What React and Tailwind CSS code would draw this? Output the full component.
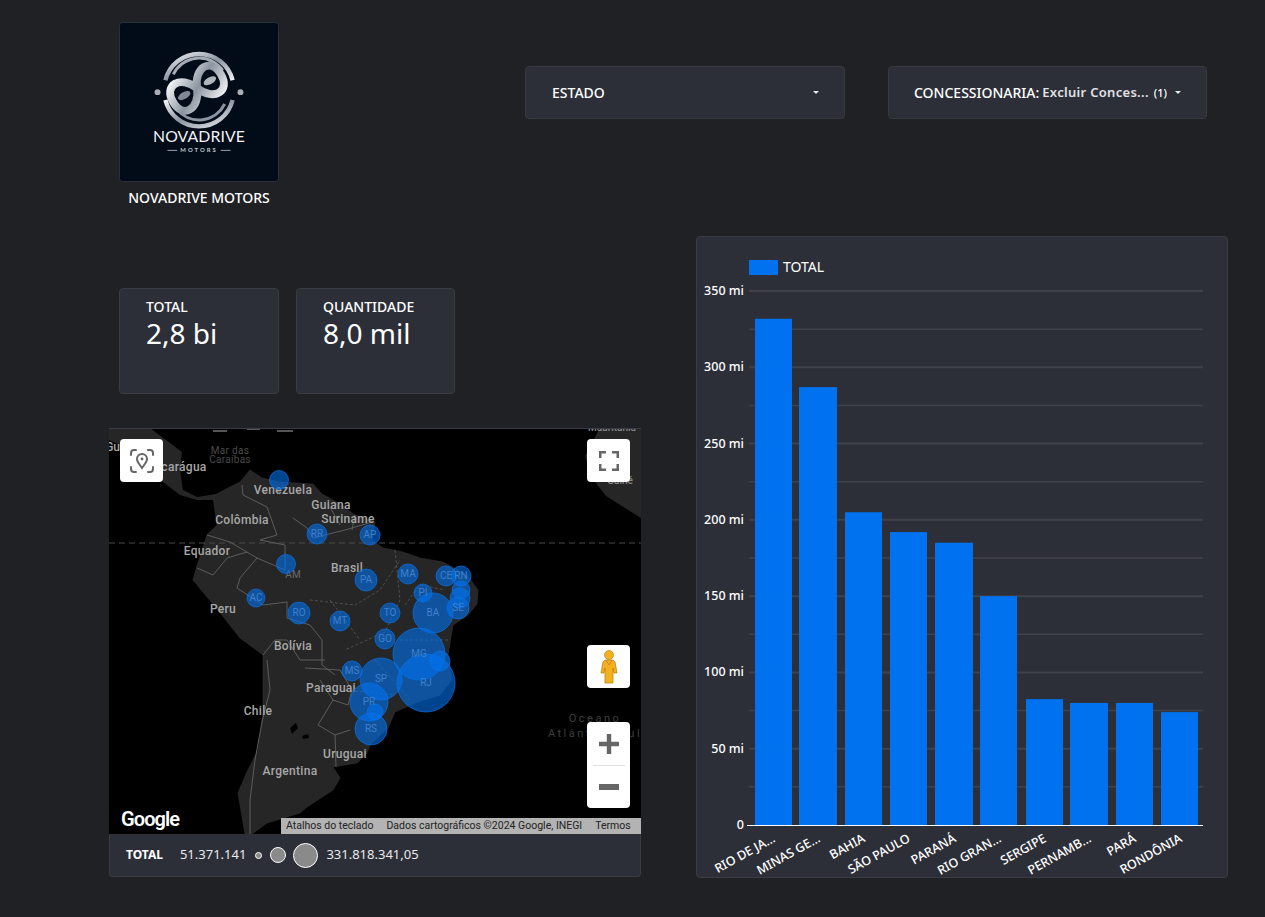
import React from 'react';

const BUBBLES = [
  [279, 480, 9.5, ''], [317, 534, 10, 'RR'], [370, 535, 10, 'AP'], [286, 564, 9.5, ''],
  [256, 598, 9, 'AC'], [299, 613, 11, 'RO'], [340, 621, 10, 'MT'], [366, 580, 11, 'PA'],
  [408, 574, 10, 'MA'], [390, 613, 10, 'TO'], [385, 639, 10, 'GO'], [423, 593, 9, 'PI'],
  [446, 576, 10, 'CE'], [461, 576, 10, 'RN'], [461, 590, 9, ''], [460, 598, 10, ''],
  [458, 608, 11, 'SE'], [433, 613, 20, 'BA'], [419, 654, 26, 'MG'], [440, 661, 10, ''],
  [426, 683, 29, 'RJ'], [381, 679, 21, 'SP'], [352, 671, 10, 'MS'], [369, 702, 19, 'PR'],
  [375, 712, 8, ''], [371, 729, 16, 'RS'],
];

const COUNTRY_LABELS = [
  ['Venezuela', 283, 494], ['Guiana', 331, 509], ['Colômbia', 242, 524], ['Suriname', 348, 523],
  ['Equador', 207, 555], ['Brasil', 347, 572], ['Peru', 223, 613], ['Bolívia', 293, 650],
  ['Paraguai', 331, 692], ['Chile', 258, 715], ['Uruguai', 345, 758], ['Argentina', 290, 775],
  ['carágua', 184, 471],
];

const BARS = [
  [755, 37, 331.8], [799, 38, 287], [845, 37, 205], [890, 37, 192], [935, 38, 185],
  [980, 37, 150], [1026, 37, 82.5], [1070, 38, 80], [1116, 37, 80], [1161, 37, 74],
];

const X_LABELS = [
  ['RIO DE JA…', 776], ['MINAS GE…', 821], ['BAHIA', 866], ['SÃO PAULO', 911], ['PARANÁ', 957],
  ['RIO GRAN…', 1002], ['SERGIPE', 1047], ['PERNAMB…', 1092], ['PARÁ', 1137], ['RONDÔNIA', 1183],
];

const yFor = (v) => 825 - v * 1.5257;

const Caret = () => (
  <svg width="6" height="3" viewBox="0 0 6 3" className="shrink-0">
    <path d="M0 0h6L3 3z" fill="#e8eaed" />
  </svg>
);

const Dropdown = ({ children, caretClass }) => (
  <div className={`flex h-[53px] items-center rounded border border-[#383a42] bg-[#2d2f38] text-sm font-medium text-white ${caretClass}`}>
    {children}
  </div>
);

const Kpi = ({ label, value, width }) => (
  <div className={`h-[106px] rounded border border-[#3a3c44] bg-[#2d2f38] pl-[26px] pt-[8px] text-white ${width}`}>
    <div className="text-sm font-medium leading-[20px]">{label}</div>
    <div className="text-[28px] leading-[32px]">{value}</div>
  </div>
);

const Logo = () => (
  <svg viewBox="0 0 160 160" className="block h-[160px] w-[160px] rounded-sm border border-[#27303a]">
    <defs>
      <linearGradient id="silver" x1="0" y1="0" x2="1" y2="1">
        <stop offset="0" stopColor="#f4f6f8" />
        <stop offset="0.5" stopColor="#8b94a0" />
        <stop offset="1" stopColor="#eef0f2" />
      </linearGradient>
    </defs>
    <rect width="160" height="160" fill="#020b18" />
    <path d="M46 58A35 35 0 0 1 114 58" fill="none" stroke="url(#silver)" strokeWidth="4.500" />
    <path d="M46 78A35 35 0 0 0 114 78" fill="none" stroke="url(#silver)" strokeWidth="4.500" />
    <path d="M54 52A29 29 0 0 1 104 48" fill="none" stroke="#a4abb4" strokeWidth="3" />
    <path d="M58 88A29 29 0 0 0 106 82" fill="none" stroke="#8b94a0" strokeWidth="3" />
    <g transform="rotate(-30 78 66)">
      <path d="M78 66C86 46 106 46 106 66C106 86 86 86 78 66C70 46 50 46 50 66C50 86 70 86 78 66Z" fill="none" stroke="url(#silver)" strokeWidth="8" />
      <ellipse cx="93" cy="66" rx="7" ry="3.500" fill="#aeb5bd" />
      <ellipse cx="63" cy="66" rx="7" ry="3.500" fill="#7f8893" />
    </g>
    <circle cx="38" cy="70" r="3" fill="#a9afb6" />
    <circle cx="122" cy="70" r="3" fill="#a9afb6" />
    <text x="80" y="120" textAnchor="middle" fill="#f1f3f5" fontSize="16" fontFamily="Lato, sans-serif" letterSpacing="0.1">NOVADRIVE</text>
    <text x="80" y="131" textAnchor="middle" fill="#c4c9cf" fontSize="6" fontWeight="700" fontFamily="Lato, sans-serif" letterSpacing="2">MOTORS</text>
    <path d="M48 129H58M102 129H112" stroke="#c4c9cf" strokeWidth="0.8" />
  </svg>
);

const MapDrawing = () => (
  <svg viewBox="109 428 532 406" className="-mt-px block h-[406px] w-[532px]">
    <rect x="109" y="428" width="532" height="406" fill="#000" />
    {/* central america and caribbean */}
    <path d="M109 428H150L182 452L180 470L183 490L197 497L216 494L217 500L197 500L180 495L163 482L140 470L120 445L109 440Z" fill="#262626" />
    <path d="M213 431H227M247 429H260M277 431H293" stroke="#555" strokeWidth="2" fill="none" />
    {/* south america */}
    <path d="M213 496L228 488L240 482L250 470L262 478L280 482L313 484L322 494L340 504L355 515L375 522L372 540L383 548L403 552L420 558L443 562L467 575L478 590L477 604L468 615L453 625L448 655L452 680L440 695L415 703L395 712L388 728L370 745L367 753L357 763L333 767L340 778L333 790L307 807L300 813L267 823L252 834H245L238 793L247 772L258 750L263 712L263 655L240 638L222 615L193 580L197 566L207 535L217 525Z" fill="#262626" stroke="#333" strokeWidth="0.6" />
    {/* africa */}
    <path d="M600 428H641V518L625 508L606 496L592 478L585 456Z" fill="#262626" />
    {/* lakes */}
    <path d="M290 728l6-5 2 5-6 6zM302 736l6-2 1 4-6 1z" fill="#000" />
    <line x1="109" y1="543" x2="641" y2="543" stroke="#4a4a4a" strokeDasharray="6 4" />
    {/* country borders */}
    <g fill="none" stroke="#5c5c5c" strokeWidth="1">
      <path d="M242 485L243 495L267 507L277 535L260 540L285 545L285 570L257 558L230 542L207 535" />
      <path d="M293 518L307 528L313 538L345 530L372 522" />
      <path d="M330 507L340 525M355 515L352 530" />
      <path d="M197 568L213 575L227 558L247 552M257 558L240 578L237 588L263 605L287 602L287 618L310 625L322 640L322 665L335 675" />
      <path d="M263 655L275 640L287 640L300 660L325 660M305 668L340 670L352 690L348 705L333 700L320 680" />
      <path d="M267 660L270 690L262 722L255 760L250 800L250 834" />
      <path d="M333 700L318 725L335 735L350 730M335 735L336 767" />
    </g>
    {/* brazilian states */}
    <g fill="none" stroke="#4e4e4e" strokeWidth="1" strokeDasharray="3 2">
      <path d="M310 600L355 605L380 590L400 560M395 550L400 600L385 632L345 650M330 600L360 640M405 605L420 585L445 590M400 640L450 640M375 660L410 700M345 690L395 695" />
    </g>
    {COUNTRY_LABELS.map(([t, x, y]) => (
      <text key={t} x={x} y={y} textAnchor="middle" fill="#a8a8a8" fontSize="12" fontWeight="500" fontFamily="Roboto, sans-serif" letterSpacing="0.3">{t}</text>
    ))}
    <text x="120" y="451" fill="#a8a8a8" fontSize="12" textAnchor="end" fontWeight="500" fontFamily="Roboto, sans-serif">Gu</text>
    <text x="230" y="454" textAnchor="middle" fill="#4b4b4b" fontSize="10" fontFamily="Roboto, sans-serif" letterSpacing="0.3">Mar das</text>
    <text x="230" y="463" textAnchor="middle" fill="#4b4b4b" fontSize="10" fontFamily="Roboto, sans-serif" letterSpacing="0.3">Caraíbas</text>
    <text x="612" y="431" textAnchor="middle" fill="#8a8a8a" fontSize="10" fontWeight="500" fontFamily="Roboto, sans-serif">Mauritânia</text>
    <text x="620" y="484" textAnchor="middle" fill="#8a8a8a" fontSize="10" fontWeight="500" fontFamily="Roboto, sans-serif">Guiné</text>
    <text x="595" y="722" textAnchor="middle" fill="#3f3f3f" fontSize="11" fontFamily="Roboto, sans-serif" letterSpacing="2.5">Oceano</text>
    <text x="595" y="737" textAnchor="middle" fill="#3f3f3f" fontSize="11" fontFamily="Roboto, sans-serif" letterSpacing="2.5">Atlântico Sul</text>
    <text x="293" y="578" textAnchor="middle" fill="#6b6b6b" fontSize="10" fontFamily="Roboto, sans-serif">AM</text>
    {BUBBLES.map(([cx, cy, r], i) => (
      <circle key={i} cx={cx} cy={cy} r={r} fill="#0072ef" fillOpacity="0.6" stroke="#0a72e6" strokeOpacity="0.7" strokeWidth="1" />
    ))}
    {BUBBLES.filter((b) => b[3]).map(([cx, cy, , t]) => (
      <text key={t} x={cx} y={cy + 3} textAnchor="middle" fill="#3f80cc" fontSize="10" fontFamily="Roboto, sans-serif">{t}</text>
    ))}
  </svg>
);

const MapButton = ({ className, children }) => (
  <div className={`absolute flex h-[43px] w-[43px] items-center justify-center rounded-sm bg-white ${className}`}>
    {children}
  </div>
);

const WorldMap = () => (
  <div className="relative h-[406px] w-[532px] overflow-hidden border-t border-[#3a3c44]">
    <MapDrawing />
    <MapButton className="left-[11px] top-[10px]">
      <svg width="24" height="24" viewBox="0 0 24 24" fill="none" stroke="#666" strokeWidth="2">
        <path d="M1 6V4a3 3 0 0 1 3-3h2M18 1h2a3 3 0 0 1 3 3v2M23 18v2a3 3 0 0 1-3 3h-2M6 23H4a3 3 0 0 1-3-3v-2" strokeLinecap="round" />
        <path d="M12 19c-2-3-5-6-5-9a5 5 0 0 1 10 0c0 3-3 6-5 9z" />
        <circle cx="12" cy="10" r="1.4" fill="#666" stroke="none" />
      </svg>
    </MapButton>
    <MapButton className="left-[478px] top-[10px]">
      <svg width="20" height="20" viewBox="0 0 20 20" fill="#666">
        <path d="M0 0h7v2.500H2.500V7H0zM13 0h7v7h-2.500V2.500H13zM0 13h2.500v4.500H7V20H0zM17.500 13H20v7h-7v-2.500h4.500z" />
      </svg>
    </MapButton>
    <MapButton className="left-[478px] top-[216px]">
      <svg width="18" height="34" viewBox="0 0 18 34">
        <circle cx="9" cy="5" r="4.500" fill="#f5b11c" stroke="#b07a10" strokeWidth="0.6" />
        <path d="M5 10h8l2 2 2 11h-3l-1-5v15H5V18l-1 5H1l2-11z" fill="#f5b11c" stroke="#b07a10" strokeWidth="0.7" />
        <path d="M6 10l3 5 3-5" fill="none" stroke="#d9822b" strokeWidth="1" />
      </svg>
    </MapButton>
    <div className="absolute left-[478px] top-[293px] flex h-[86px] w-[43px] flex-col items-center rounded-sm bg-white">
      <div className="flex h-[43px] items-center">
        <svg width="20" height="20" viewBox="0 0 18 18" fill="#666"><path d="M7 0h4v7h7v4h-7v7H7v-7H0V7h7z" /></svg>
      </div>
      <div className="h-px w-[32px] bg-[#e0e0e0]" />
      <div className="flex h-[42px] items-center">
        <svg width="20" height="6" viewBox="0 0 20 6" fill="#666"><path d="M0 0h20v6H0z" /></svg>
      </div>
    </div>
    <div className="absolute bottom-[3px] left-[12px] text-[20px] font-semibold leading-[24px] tracking-[-0.9px] text-white [font-family:Roboto,sans-serif]">Google</div>
    <div className="absolute bottom-0 right-0 flex h-[16px] w-[360px] items-center bg-[#b3b3b3] pl-[5px] text-[10.5px] text-[#222] [font-family:Roboto,sans-serif]">
      <span>Atalhos do teclado</span>
      <span className="ml-[13px]">Dados cartográficos ©2024 Google, INEGI</span>
      <span className="ml-[13px]">Termos</span>
    </div>
  </div>
);

const MapLegend = () => (
  <div className="flex h-[43px] items-center rounded-b border border-t-0 border-[#3a3c44] bg-[#2d2f38] pl-[16px] text-white">
    <span className="text-xs font-bold">TOTAL</span>
    <span className="ml-[17px] text-[13px] text-[#e8eaed]">51.371.141</span>
    <span className="ml-[9px] h-[7px] w-[7px] rounded-full border border-white bg-[#8a8a8a]" />
    <span className="ml-[8px] h-[16px] w-[16px] rounded-full border border-white bg-[#8a8a8a]" />
    <span className="ml-[7px] h-[25px] w-[25px] rounded-full border border-white bg-[#8a8a8a]" />
    <span className="ml-[8px] text-[13px] text-[#e8eaed]">331.818.341,05</span>
  </div>
);

const BarChart = () => {
  const grid = [];
  for (let v = 0; v <= 350; v += 25) grid.push(v);
  return (
    <svg viewBox="697 237 530 640" className="block h-full w-full" fontFamily="'Noto Sans', sans-serif">
      <rect x="749" y="260" width="29" height="15" fill="#0072ef" />
      <text x="783" y="272" fill="#fff" fontSize="14">TOTAL</text>
      {grid.slice(1).map((v) => (
        <line key={v} x1="749" x2="1203" y1={yFor(v)} y2={yFor(v)} stroke="#40424a" strokeWidth={v % 50 === 0 ? 2 : 1.500} />
      ))}
      {grid.filter((v) => v % 50 === 0).map((v) => (
        <text key={v} x="744" y={yFor(v) + 4} textAnchor="end" fill="#fff" fontSize="12.500" fontWeight="500">{v === 0 ? '0' : `${v} mi`}</text>
      ))}
      {BARS.map(([x, w, v]) => (
        <rect key={x} x={x} y={yFor(v)} width={w} height={825 - yFor(v)} fill="#0072ef" />
      ))}
      <line x1="747" x2="1203" y1="825.500" y2="825.500" stroke="#fff" />
      {X_LABELS.map(([t, x]) => (
        <text key={t} x={x} y="841" textAnchor="end" fill="#fff" fontSize="12.500" fontWeight="500" transform={`rotate(-29 ${x} 841)`}>{t}</text>
      ))}
    </svg>
  );
};

export default function App() {
  return (
    <div className="h-[917px] w-[1265px] overflow-hidden bg-[#202124] [font-family:'Noto_Sans',sans-serif]">
      <div className="flex h-[236px] items-start pt-[22px]">
        <div className="ml-[119px] w-[160px]">
          <Logo />
          <div className="mt-[6px] text-center text-sm font-medium leading-[20px] text-white">NOVADRIVE MOTORS</div>
        </div>
        <div className="ml-[246px] mt-[44px] flex gap-[43px]">
          <div className="w-[320px]">
            <Dropdown caretClass="justify-between pl-[26px] pr-[25px]">
              <span>ESTADO</span>
              <Caret />
            </Dropdown>
          </div>
          <div className="w-[319px]">
            <Dropdown caretClass="pl-[25px] pr-[25px]">
              <span>CONCESSIONARIA:</span>
              <span className="ml-[3px] text-[13px] font-semibold tracking-[0.3px] text-[#e0e2e6]">Excluir Conces...</span>
              <span className="ml-[5px] text-[11px]">(1)</span>
              <span className="ml-auto"><Caret /></span>
            </Dropdown>
          </div>
        </div>
      </div>
      <div className="flex">
        <div className="ml-[109px] w-[532px]">
          <div className="ml-[10px] mt-[52px] flex gap-[17px]">
            <Kpi label="TOTAL" value="2,8 bi" width="w-[160px]" />
            <Kpi label="QUANTIDADE" value="8,0 mil" width="w-[159px]" />
          </div>
          <div className="mt-[34px]">
            <WorldMap />
            <MapLegend />
          </div>
        </div>
        <div className="ml-[55px] h-[642px] w-[532px] rounded border border-[#3a3c44] bg-[#2d2f38]">
          <BarChart />
        </div>
      </div>
    </div>
  );
}
